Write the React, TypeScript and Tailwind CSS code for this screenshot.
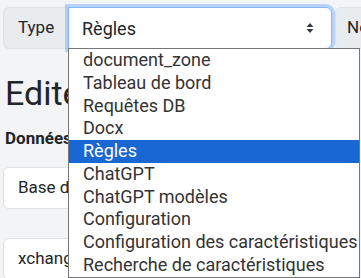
const OPTIONS = [
  "document_zone",
  "Tableau de bord",
  "Requêtes DB",
  "Docx",
  "Règles",
  "ChatGPT",
  "ChatGPT modèles",
  "Configuration",
  "Configuration des caractéristiques",
  "Recherche de caractéristiques",
];

function SortArrows() {
  return (
    <svg width="8" height="12" viewBox="0 0 8 12" className="shrink-0">
      <path d="M4 1 L7.5 5 L0.5 5 Z" fill="#343a40" />
      <path d="M4 11 L7.5 7 L0.5 7 Z" fill="#343a40" />
    </svg>
  );
}

export default function App() {
  return (
    <div className="relative h-[278px] w-[361px] overflow-hidden bg-[#f3f4f6] font-['Roboto',sans-serif] text-[#212529]">
      <div className="flex pl-[3px] pt-[7px]">
        <div className="flex h-[42px] w-[65px] shrink-0 items-center rounded-l-[6px] border border-r-0 border-[#dee2e6] bg-[#e9ecef] pl-[14px] text-[17px]">
          Type
        </div>
        <div className="flex h-[42px] w-[264px] shrink-0 items-center justify-between rounded-r-[6px] border border-[#86b7fe] bg-white pl-[13px] pr-[17px] text-[18px] shadow-[0_0_0_3px_rgba(13,110,253,0.25)]">
          <span>Règles</span>
          <SortArrows />
        </div>
        <div className="ml-[3px] flex h-[42px] w-[80px] shrink-0 items-center rounded-l-[6px] border border-[#dee2e6] bg-[#e9ecef] pl-[11px] text-[17px]">
          Nom
        </div>
      </div>

      <h1 className="mt-[24px] pl-[5px] text-[34px] leading-[40px] font-normal">Editer la règle</h1>
      <div className="mt-[15px] pl-[5px] text-[17px] leading-[20px] font-bold">Données</div>

      <div className="ml-[3px] mt-[19px] flex h-[42px] w-[330px] items-center rounded-[6px] border border-[#dee2e6] bg-white pl-[14px] text-[17px]">
        Base de données
      </div>
      <div className="ml-[3px] mt-[29px] flex h-[42px] w-[330px] items-center rounded-[6px] border border-[#dee2e6] bg-white pl-[14px] text-[17px]">
        xchange
      </div>

      <ul className="absolute left-[68px] top-[48px] w-[292px] border border-[#767676] bg-white text-[18px] text-[#333]">
        {OPTIONS.map((opt) => (
          <li
            key={opt}
            className={
              opt === "Règles"
                ? "h-[22.75px] whitespace-nowrap bg-[#1967d2] pl-[14px] leading-[22.75px] text-white"
                : "h-[22.75px] whitespace-nowrap pl-[14px] leading-[22.75px]"
            }
          >
            {opt}
          </li>
        ))}
      </ul>
    </div>
  );
}
